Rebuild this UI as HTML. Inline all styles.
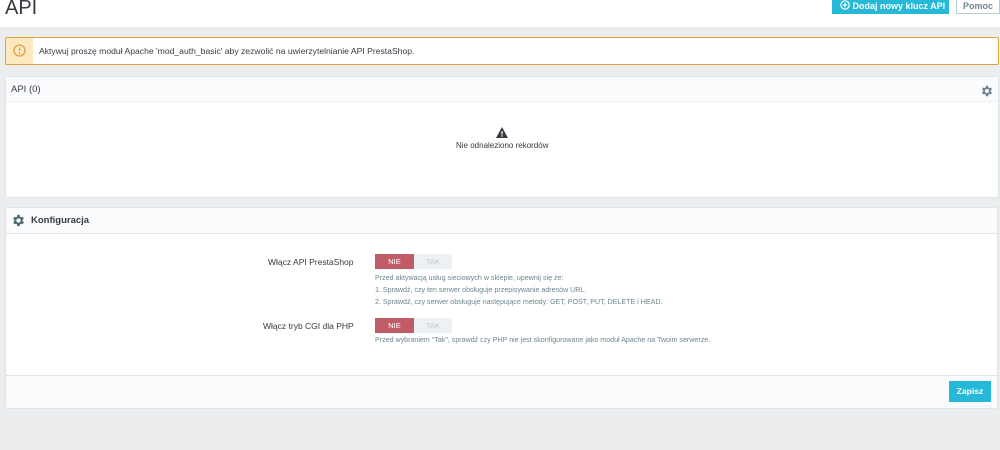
<!DOCTYPE html>
<html><head><meta charset="utf-8"><style>
*{margin:0;padding:0;box-sizing:border-box}
body{width:1000px;height:450px;overflow:hidden;background:#ebedef;font-family:"Liberation Sans",sans-serif;color:#363a41;position:relative}
.a{position:absolute}
.top{left:0;top:0;width:1000px;height:27px;background:#fff}
.panel{background:#fff;border:1px solid #dbe6e9;border-radius:3px}
.t{white-space:nowrap}
</style></head><body>
<div class="a top"></div>
<div class="a t" style="left:5px;top:-3px;font-size:20px;color:#363a41">API</div>
<div class="a t" style="left:832px;top:0;width:117px;height:14px;background:#25b9d7;color:#fff;font-size:9px;font-weight:bold;line-height:12px;padding-left:8px">
<svg width="10" height="10" viewBox="0 0 10 10" style="vertical-align:-1px"><circle cx="5" cy="5" r="4.2" fill="none" stroke="#fff" stroke-width="1.2"/><path d="M5 2.8v4.4M2.8 5h4.4" stroke="#fff" stroke-width="1.2"/></svg> Dodaj nowy klucz API</div>
<div class="a t" style="left:956px;top:0;width:44px;height:14px;border:1px solid #bbcdd2;border-top:none;background:#fff;color:#6c868e;font-size:9px;font-weight:bold;line-height:12px;text-align:center">Pomoc</div>

<div class="a" style="left:5px;top:37px;width:994px;height:28px;background:#fff;border:1px solid #d9a443;border-radius:2px"></div>
<div class="a" style="left:6px;top:38px;width:27px;height:26px;background:#fde9c0"></div>
<svg class="a" style="left:13px;top:44px" width="13" height="13" viewBox="0 0 13 13"><circle cx="6.5" cy="6.5" r="5.5" fill="none" stroke="#d9a443" stroke-width="1.3"/><path d="M6.5 3.5v3.6" stroke="#d9a443" stroke-width="1.3"/><circle cx="6.5" cy="9.2" r=".8" fill="#d9a443"/></svg>
<div class="a t" style="left:39px;top:46px;font-size:8.6px;color:#363a41">Aktywuj proszę moduł Apache 'mod_auth_basic' aby zezwolić na uwierzytelnianie API PrestaShop.</div>

<div class="a panel" style="left:5px;top:76px;width:994px;height:122px"></div>
<div class="a" style="left:6px;top:77px;width:992px;height:25px;background:#fafbfc;border-bottom:1px solid #eef1f3"></div>
<div class="a t" style="left:11px;top:84px;font-size:9.5px;">API (0)</div>
<svg class="a" style="left:980px;top:84px" width="14" height="14" viewBox="0 0 24 24"><path fill="#6c868e" d="M19.4 13a7.5 7.5 0 000-2l2.1-1.6-2-3.5-2.5 1a7.6 7.6 0 00-1.7-1L15 3h-4l-.4 2.9a7.6 7.6 0 00-1.7 1l-2.5-1-2 3.5L6.5 11a7.5 7.5 0 000 2l-2.1 1.6 2 3.5 2.5-1a7.6 7.6 0 001.7 1L11 21h4l.4-2.9a7.6 7.6 0 001.7-1l2.5 1 2-3.5zM13 15.5a3.5 3.5 0 110-7 3.5 3.5 0 010 7z" transform="translate(-1 0)"/></svg>
<svg class="a" style="left:496px;top:127px" width="12" height="11" viewBox="0 0 12 11"><path d="M6 0L12 11H0z" fill="#363a41"/><path d="M6 4v3.5" stroke="#fff" stroke-width="1.2"/><circle cx="6" cy="9" r=".7" fill="#fff"/></svg>
<div class="a t" style="left:456px;top:141px;font-size:8px;color:#363a41">Nie odnaleziono rekordów</div>

<div class="a panel" style="left:5px;top:207px;width:993px;height:202px"></div>
<div class="a" style="left:6px;top:208px;width:991px;height:26px;background:#fafbfc;border-bottom:1px solid #dbe6e9"></div>
<svg class="a" style="left:11px;top:213px" width="15" height="15" viewBox="0 0 24 24"><path fill="#4f6a73" d="M19.4 13a7.5 7.5 0 000-2l2.1-1.6-2-3.5-2.5 1a7.6 7.6 0 00-1.7-1L15 3h-4l-.4 2.9a7.6 7.6 0 00-1.7 1l-2.5-1-2 3.5L6.5 11a7.5 7.5 0 000 2l-2.1 1.6 2 3.5 2.5-1a7.6 7.6 0 001.7 1L11 21h4l.4-2.9a7.6 7.6 0 001.7-1l2.5 1 2-3.5zM13 15.5a3.5 3.5 0 110-7 3.5 3.5 0 010 7z" transform="translate(-1 0)"/></svg>
<div class="a t" style="left:31px;top:215px;font-size:9.5px;font-weight:bold;color:#363a41">Konfiguracja</div>

<div class="a t" style="left:268px;top:257px;font-size:8.5px">Włącz API PrestaShop</div>
<div class="a t" style="left:375px;top:254px;width:39px;height:15px;background:#c05c67;color:#fff;font-size:7.5px;line-height:15px;text-align:center">NIE</div>
<div class="a t" style="left:414px;top:254px;width:38px;height:15px;background:#eef1f3;color:#bbcdd2;font-size:7.5px;line-height:15px;text-align:center">TAK</div>
<div class="a t" style="left:375px;top:272px;font-size:7.1px;color:#6c868e;line-height:12px">Przed aktywacją usług sieciowych w sklepie, upewnij się że:<br>1. Sprawdź, czy ten serwer obsługuje przepisywanie adresów URL.<br>2. Sprawdź, czy serwer obsługuje następujące metody: GET, POST, PUT, DELETE i HEAD.</div>

<div class="a t" style="left:263px;top:321px;font-size:8.5px">Włącz tryb CGI dla PHP</div>
<div class="a t" style="left:375px;top:318px;width:39px;height:15px;background:#c05c67;color:#fff;font-size:7.5px;line-height:15px;text-align:center">NIE</div>
<div class="a t" style="left:414px;top:318px;width:38px;height:15px;background:#eef1f3;color:#bbcdd2;font-size:7.5px;line-height:15px;text-align:center">TAK</div>
<div class="a t" style="left:375px;top:336px;font-size:7.1px;color:#6c868e">Przed wybraniem "Tak", sprawdź czy PHP nie jest skonfigurowane jako moduł Apache na Twoim serwerze.</div>

<div class="a" style="left:6px;top:375px;width:991px;height:33px;background:#fafbfc;border-top:1px solid #dbe6e9"></div>
<div class="a t" style="left:949px;top:381px;width:42px;height:21px;background:#25b9d7;color:#fff;font-size:8.5px;font-weight:bold;line-height:21px;text-align:center">Zapisz</div>
</body></html>
